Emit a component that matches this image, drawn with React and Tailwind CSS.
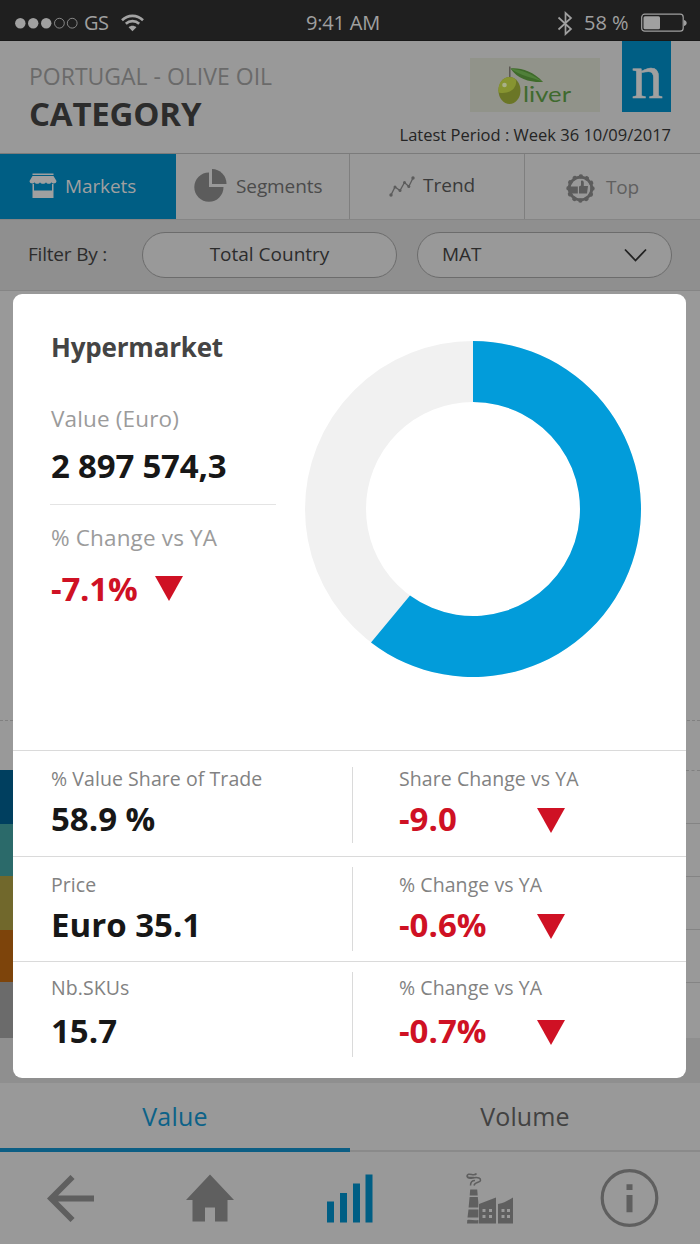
const shelfBands = [
  { id: 'navy', className: 'h-[54px] bg-[#003f5f]' },
  { id: 'teal', className: 'h-[52px] bg-[#2b6a6a]' },
  { id: 'olive', className: 'h-[54px] bg-[#71682c]' },
  { id: 'orange', className: 'h-[52px] bg-[#7d440b]' },
  { id: 'grey', className: 'h-[56px] bg-[#6b6b6b]' },
];

const metricRows = [
  {
    label: '% Value Share of Trade',
    value: '58.9 %',
    changeLabel: 'Share Change vs YA',
    change: '-9.0',
    row: 'h-[106px] pt-[15px]',
    gap: 'mt-[7px]',
    rule: 'mt-px h-[76px]',
  },
  {
    label: 'Price',
    value: 'Euro 35.1',
    changeLabel: '% Change vs YA',
    change: '-0.6%',
    row: 'h-[105px] pt-[15px]',
    gap: 'mt-[7px]',
    rule: '-mt-[5px] h-[84px]',
  },
  {
    label: 'Nb.SKUs',
    value: '15.7',
    changeLabel: '% Change vs YA',
    change: '-0.7%',
    row: 'h-[117px] pt-[13px]',
    gap: 'mt-[10px]',
    rule: '-mt-[3px] h-[85px]',
  },
];

function WifiIcon() {
  return (
    <svg width="23" height="18" viewBox="0 0 23 18" fill="none" stroke="#a3a3a3">
      <path d="M1 6.2C7 0.4 16 0.4 22 6.2" strokeWidth="2.6" />
      <path d="M4.8 9.8C8.6 6.2 14.4 6.2 18.2 9.8" strokeWidth="2.6" />
      <path d="M7.6 13.2C9.8 11.2 13.2 11.2 15.4 13.2L11.5 17.2Z" fill="#a3a3a3" stroke="none" />
    </svg>
  );
}

function StatusBar() {
  return (
    <div className="flex h-[41px] items-start border-b border-[#181818] bg-[#1f1f1f] pt-[5px] text-[20px] leading-9 text-[#a0a0a0]">
      <div className="flex w-[306px] items-center pl-[15px]">
        <svg width="63" height="12" viewBox="0 0 63 12" fill="#a0a0a0">
          <circle cx="5.3" cy="6.2" r="5.2" />
          <circle cx="18.2" cy="6.2" r="5.2" />
          <circle cx="31.2" cy="6.2" r="5.2" />
          <circle cx="44.4" cy="6.2" r="4.9" fill="none" stroke="#a0a0a0" strokeWidth="0.8" />
          <circle cx="57.2" cy="6.2" r="4.9" fill="none" stroke="#a0a0a0" strokeWidth="0.8" />
        </svg>
        <span className="ml-[6px] w-[37px] tracking-[-0.6px]">GS</span>
        <WifiIcon />
      </div>
      <span className="w-[251px] tracking-[-0.2px]">9:41 AM</span>
      <svg className="mt-[6px]" width="17" height="25" viewBox="0 0 17 25" fill="none" stroke="#a0a0a0" strokeWidth="1.7">
        <path d="M1.5 6.5L14 18L8.5 23V2L14 7L1.5 18.5" />
      </svg>
      <span className="ml-[10px] w-[57px]">58 %</span>
      <svg className="mt-[8px]" width="46" height="20" viewBox="0 0 46 20">
        <rect x="0.7" y="1.2" width="41.5" height="17" rx="3" fill="none" stroke="#a0a0a0" strokeWidth="1.2" />
        <rect x="2.5" y="3.2" width="16.5" height="13" rx="1.5" fill="#a0a0a0" />
        <path d="M43 7C46.6 8 46.6 12 43 13Z" fill="#a0a0a0" />
      </svg>
    </div>
  );
}

function OliverLogo() {
  return (
    <svg width="130" height="54" viewBox="0 0 130 54">
      <rect width="130" height="54" fill="#91938a" />
      <path d="M39.8 21V8.5" stroke="#57534c" strokeWidth="1.4" />
      <path d="M40.5 10.5C50 9.500 63 13 73 24C60 24.500 48 21.500 40.500 10.500Z" fill="#3f6b2a" />
      <path d="M40.5 10.5C52 12 62 16 73 24C62 19 50 18 40.500 10.500Z" fill="#50803a" />
      <ellipse cx="39.5" cy="32.5" rx="11" ry="13.5" fill="#6b7626" />
      <path d="M28.6 34.500C27.500 26 32 19.500 39 19C41.500 19 44 19.800 45.800 21.500C47.800 30 39 37 28.600 34.500Z" fill="#879431" />
      <circle cx="34.5" cy="27" r="2.3" fill="#a9b089" />
      <text x="53" y="44" textLength="48" lengthAdjust="spacingAndGlyphs" fontFamily="Lato, sans-serif" fontSize="21" fill="#3f6a2e">liver</text>
    </svg>
  );
}

function Header() {
  return (
    <header className="flex h-[113px] justify-between border-b border-[#7b7b7b] bg-[#999] pr-[29px] pl-[29px]">
      <div className="pt-[19px]">
        <div className="text-[23px] leading-8 text-[#6a6a6a]">PORTUGAL - OLIVE OIL</div>
        <h1 className="mt-0.5 text-[33px] leading-10 font-bold tracking-[-0.2px] text-[#2c2c2c]">CATEGORY</h1>
      </div>
      <div className="flex flex-col items-end">
        <div className="flex items-start">
          <div className="mt-[17px] mr-[22px]"><OliverLogo /></div>
          <svg width="49" height="71" viewBox="0 0 49 71">
            <rect width="49" height="71" fill="#005e84" />
            <text x="9.500" y="57" fontFamily="Liberation Serif, serif" fontSize="63" fill="#a0a0a0" stroke="#a0a0a0" strokeWidth="0.5">n</text>
          </svg>
        </div>
        <div className="mt-[11px] text-[16.5px] leading-6 whitespace-nowrap text-[#242424]">Latest Period : Week 36 10/09/2017</div>
      </div>
    </header>
  );
}

function ShopIcon() {
  return (
    <svg width="28" height="26" viewBox="0 0 28 26" fill="#a0a0a0">
      <path d="M3.500 0.500H24.500V2H3.500ZM3.500 3H24.500L27.500 8C27.500 10.800 23.500 11.300 22.500 9.300C21.500 11.300 18 11.300 17 9.300C16 11.300 12 11.300 11 9.300C10 11.300 6.500 11.300 5.500 9.300C4.500 11.300 0.500 10.800 0.500 8Z" />
      <path fillRule="evenodd" d="M3.500 11H24.500V25H3.500ZM5 11V17.500H23V11Z" />
    </svg>
  );
}

function PieIcon() {
  return (
    <svg width="33" height="33" viewBox="0 0 33 33" fill="#5c5c5c">
      <path d="M15 3.500V18H29.500A14.600 14.600 0 1 1 15 3.500Z" />
      <path d="M18 0A14.800 14.800 0 0 1 32.500 15H18Z" />
    </svg>
  );
}

function TrendIcon() {
  return (
    <svg width="26" height="21" viewBox="0 0 26 21" fill="#5c5c5c">
      <path d="M2 19L6 11L11 14.500L15.500 6.500L19.800 10.500L24 2" fill="none" stroke="#5c5c5c" strokeWidth="1.3" />
      <circle cx="2" cy="19" r="1.700" />
      <circle cx="6" cy="11" r="1.500" />
      <circle cx="11" cy="14.500" r="1.500" />
      <circle cx="15.500" cy="6.500" r="1.500" />
      <circle cx="19.800" cy="10.500" r="1.500" />
      <circle cx="24" cy="2" r="1.700" />
    </svg>
  );
}

function TopIcon() {
  return (
    <svg width="29" height="29" viewBox="0 0 29 29" fill="#5c5c5c">
      <circle cx="14.500" cy="14.500" r="11.300" fill="none" stroke="#5c5c5c" strokeWidth="2.800" />
      <circle cx="14.500" cy="14.500" r="12" fill="none" stroke="#5c5c5c" strokeWidth="4.400" strokeLinecap="round" strokeDasharray="0.01 6.273" />
      <path d="M3 12.500H11.800V19.500H4Z" />
      <path d="M13 12.500L15 11.500V7C16.500 6 18 7 17.800 9V12H22L21 19.500H13Z" />
    </svg>
  );
}

function Tabs() {
  return (
    <nav className="flex h-[66px] border-b border-[#858585] bg-[#999] text-[19px] leading-[26px]">
      <div className="flex w-[176px] bg-[#005e84] pl-[29px] text-[#a0a0a0]">
        <div className="mt-[19px]"><ShopIcon /></div>
        <span className="mt-[19px] ml-[8px] tracking-[-0.1px]">Markets</span>
      </div>
      <div className="flex w-[174px] border-r border-[#7f7f7f] pl-[18px] text-[#4b4b4b]">
        <div className="mt-[15px]"><PieIcon /></div>
        <span className="mt-[19px] ml-[9px] tracking-[-0.1px]">Segments</span>
      </div>
      <div className="flex w-[175px] border-r border-[#7f7f7f] pl-[39px] text-[#3a3a3a]">
        <div className="mt-[22px]"><TrendIcon /></div>
        <span className="mt-[18px] ml-[8px]">Trend</span>
      </div>
      <div className="flex w-[175px] pl-[41px] text-[#606060]">
        <div className="mt-[20px]"><TopIcon /></div>
        <span className="mt-[20px] ml-[11px] tracking-[-0.2px]">Top</span>
      </div>
    </nav>
  );
}

function FilterBar() {
  return (
    <div className="flex h-[71px] items-start border-b border-[#858585] bg-[#8f8f8f] pt-[12px] pl-[28px] text-[19px] leading-[42px] text-[#2c2c2c]">
      <span className="w-[114px] pt-px tracking-[-0.2px]">Filter By :</span>
      <div className="h-[46px] w-[255px] rounded-full border border-[#6c6c6c] bg-[#999] text-center">Total Country</div>
      <div className="ml-[20px] flex h-[46px] w-[255px] justify-between rounded-full border border-[#6c6c6c] bg-[#999] pr-[24px] pl-[24px]">
        <span>MAT</span>
        <svg className="mt-[15px]" width="23" height="15" viewBox="0 0 23 15" fill="none" stroke="#222" strokeWidth="1.8">
          <path d="M1 1.500L11.500 12.500L22 1.500" />
        </svg>
      </div>
    </div>
  );
}

function ShelfBackdrop() {
  return (
    <div className="flex h-[792px] flex-col bg-[#8f8f8f]">
      <div className="h-[430px] border-b border-dashed border-[#808080] bg-[#999]" />
      <div className="h-[49px] bg-[#999]" />
      <div className="flex h-[268px] justify-between bg-[#999]">
        <div className="flex w-[14px] flex-col">
          {shelfBands.map((band) => (
            <div key={band.id} className={band.className} />
          ))}
        </div>
        <div className="w-[14px] border-t border-dashed border-[#808080]">
          <div className="h-[53px] border-b border-[#848484]" />
          <div className="h-[53px] border-b border-[#848484]" />
          <div className="h-[53px] border-b border-[#848484]" />
          <div className="h-[53px] border-b border-[#848484]" />
        </div>
      </div>
    </div>
  );
}

function DownTriangle() {
  return (
    <svg width="28" height="25" viewBox="0 0 28 25">
      <path d="M0 0H28L14 25Z" fill="#cf1124" />
    </svg>
  );
}

function DonutChart() {
  return (
    <svg width="336" height="336" viewBox="-168 -168 336 336">
      <circle r="137.5" fill="none" stroke="#f1f1f1" strokeWidth="61" />
      <path d="M0 -168A168 168 0 1 1 -102 133.500L-63 86.500A107 107 0 1 0 0 -107Z" fill="#029cda" />
    </svg>
  );
}

function DetailCard() {
  return (
    <section className="absolute top-[294px] left-[13px] h-[784px] w-[673px] overflow-hidden rounded-[9px] bg-white">
      <div className="flex h-[456px] pl-[37px]">
        <div className="w-[226px]">
          <h2 className="mt-[35px] pl-px text-[26px] leading-9 font-bold tracking-[-0.2px] text-[#444]">Hypermarket</h2>
          <div className="mt-[39px] pl-px text-[22.5px] leading-[30px] tracking-[0.15px] text-[#9b9b9b]">Value (Euro)</div>
          <div className="mt-[12px] pl-px text-[33px] leading-10 font-bold tracking-[-0.2px] text-[#171717]">2 897 574,3</div>
          <div className="mt-[18px] h-px bg-[#e4e4e4]" />
          <div className="mt-[18px] pl-px text-[22.5px] leading-[30px] tracking-[0.15px] text-[#9b9b9b]">% Change vs YA</div>
          <div className="mt-[16px] flex pl-px text-[33px] leading-10 font-bold tracking-[-0.2px] text-[#cf1124]">
            <span className="w-[104px]">-7.1%</span>
            <div className="mt-[7px]"><DownTriangle /></div>
          </div>
        </div>
        <div className="mt-[47px] ml-[29px]"><DonutChart /></div>
      </div>
      {metricRows.map((item) => (
        <div key={item.label} className={`flex border-t border-[#dadada] ${item.row}`}>
          <div className="w-[339px] pl-[38px]">
            <div className="text-[19.5px] leading-[26px] tracking-[0.07px] text-[#828282]">{item.label}</div>
            <div className={`text-[33px] leading-10 font-bold text-[#171717] ${item.gap}`}>{item.value}</div>
          </div>
          <div className={`w-px bg-[#dadada] ${item.rule}`} />
          <div className="pl-[46px]">
            <div className="text-[19.5px] leading-[26px] tracking-[0.07px] text-[#828282]">{item.changeLabel}</div>
            <div className={`flex text-[33px] leading-10 font-bold text-[#cf1124] ${item.gap}`}>
              <span className="w-[138px]">{item.change}</span>
              <div className="mt-[9px]"><DownTriangle /></div>
            </div>
          </div>
        </div>
      ))}
    </section>
  );
}

function MeasureTabs() {
  return (
    <div className="flex h-[69px] bg-[#999] text-center text-[25px] leading-[34px]">
      <div className="w-1/2 border-b-4 border-[#0c5e84] pt-[16px] tracking-[0.2px] text-[#0c6288]">Value</div>
      <div className="w-1/2 border-b-2 border-[#8a8a8a] pt-[16px] tracking-[0.1px] text-[#424242]">Volume</div>
    </div>
  );
}

function FactoryIcon() {
  return (
    <svg width="48" height="52" viewBox="0 0 48 52" fill="#5f5f5f">
      <g fill="none" stroke="#5f5f5f" strokeWidth="1.500">
        <path d="M10.500 1.500C9 4 5 1.800 2.500 2.300C0.500 3 1 5.500 3 5.500H8" />
        <path d="M1 3.500C1 7.500 6 5.800 8 5.800C12 5 15 6.200 14.500 8.500C14 11 9 9.500 8 13.500" />
        <path d="M9 8.500C6 8.500 4.500 10 4.500 13.500" />
      </g>
      <path d="M4.200 17.500H11.200L11.700 23.500H3.700ZM3.600 25H11.800L12.300 30V35.500H2.600ZM2.500 37.500H12.400V45.500H1.500ZM1.300 48C5 47.300 8 49 12.400 48V51.500H1Z" />
      <path fillRule="evenodd" d="M13 32L30 25.500V51.500H13ZM16.500 37V40H19.500V37ZM23 37V40H26V37ZM16.500 43V46H19.500V43ZM23 43V46H26V43Z" />
      <path fillRule="evenodd" d="M32 32C38 31 42 28.500 47 25.500V51.500H32ZM35.500 37V40H38.500V37ZM41 37V40H44V37ZM35.500 43V46H38.500V43ZM41 43V46H44V43Z" />
    </svg>
  );
}

function BottomNav() {
  return (
    <nav className="grid h-[92px] grid-cols-5 items-center justify-items-center bg-[#999]">
      <svg width="47" height="47" viewBox="0 0 47 47" fill="none" stroke="#5f5f5f" strokeWidth="5.800">
        <path d="M25.500 2L4 23.500L25.500 45M4 23.500H47" />
      </svg>
      <svg width="48" height="48" viewBox="0 0 48 48" fill="#5f5f5f">
        <path d="M24 0.500L48 26H41.500V47.500H29V33.500H19V47.500H6.500V26H0Z" />
      </svg>
      <svg width="46" height="49" viewBox="0 0 46 49" fill="#005e84">
        <path d="M0 27.500H7V48.500H0ZM13 19H20V48.500H13ZM26 9.500H33V48.500H26ZM38.500 0.500H45.500V48.500H38.500Z" />
      </svg>
      <FactoryIcon />
      <svg width="60" height="60" viewBox="0 0 60 60" fill="#5f5f5f">
        <circle cx="29.500" cy="30" r="27.300" fill="none" stroke="#5f5f5f" strokeWidth="3.200" />
        <path d="M26.500 16.200H32.500V22H26.500ZM26.500 27H32.500V44.300H26.500Z" />
      </svg>
    </nav>
  );
}

export default function App() {
  return (
    <main className="relative flex h-[1244px] w-[700px] flex-col overflow-hidden bg-[#999] font-['Open_Sans','Noto_Sans',sans-serif]">
      <StatusBar />
      <Header />
      <Tabs />
      <FilterBar />
      <ShelfBackdrop />
      <MeasureTabs />
      <BottomNav />
      <DetailCard />
    </main>
  );
}
